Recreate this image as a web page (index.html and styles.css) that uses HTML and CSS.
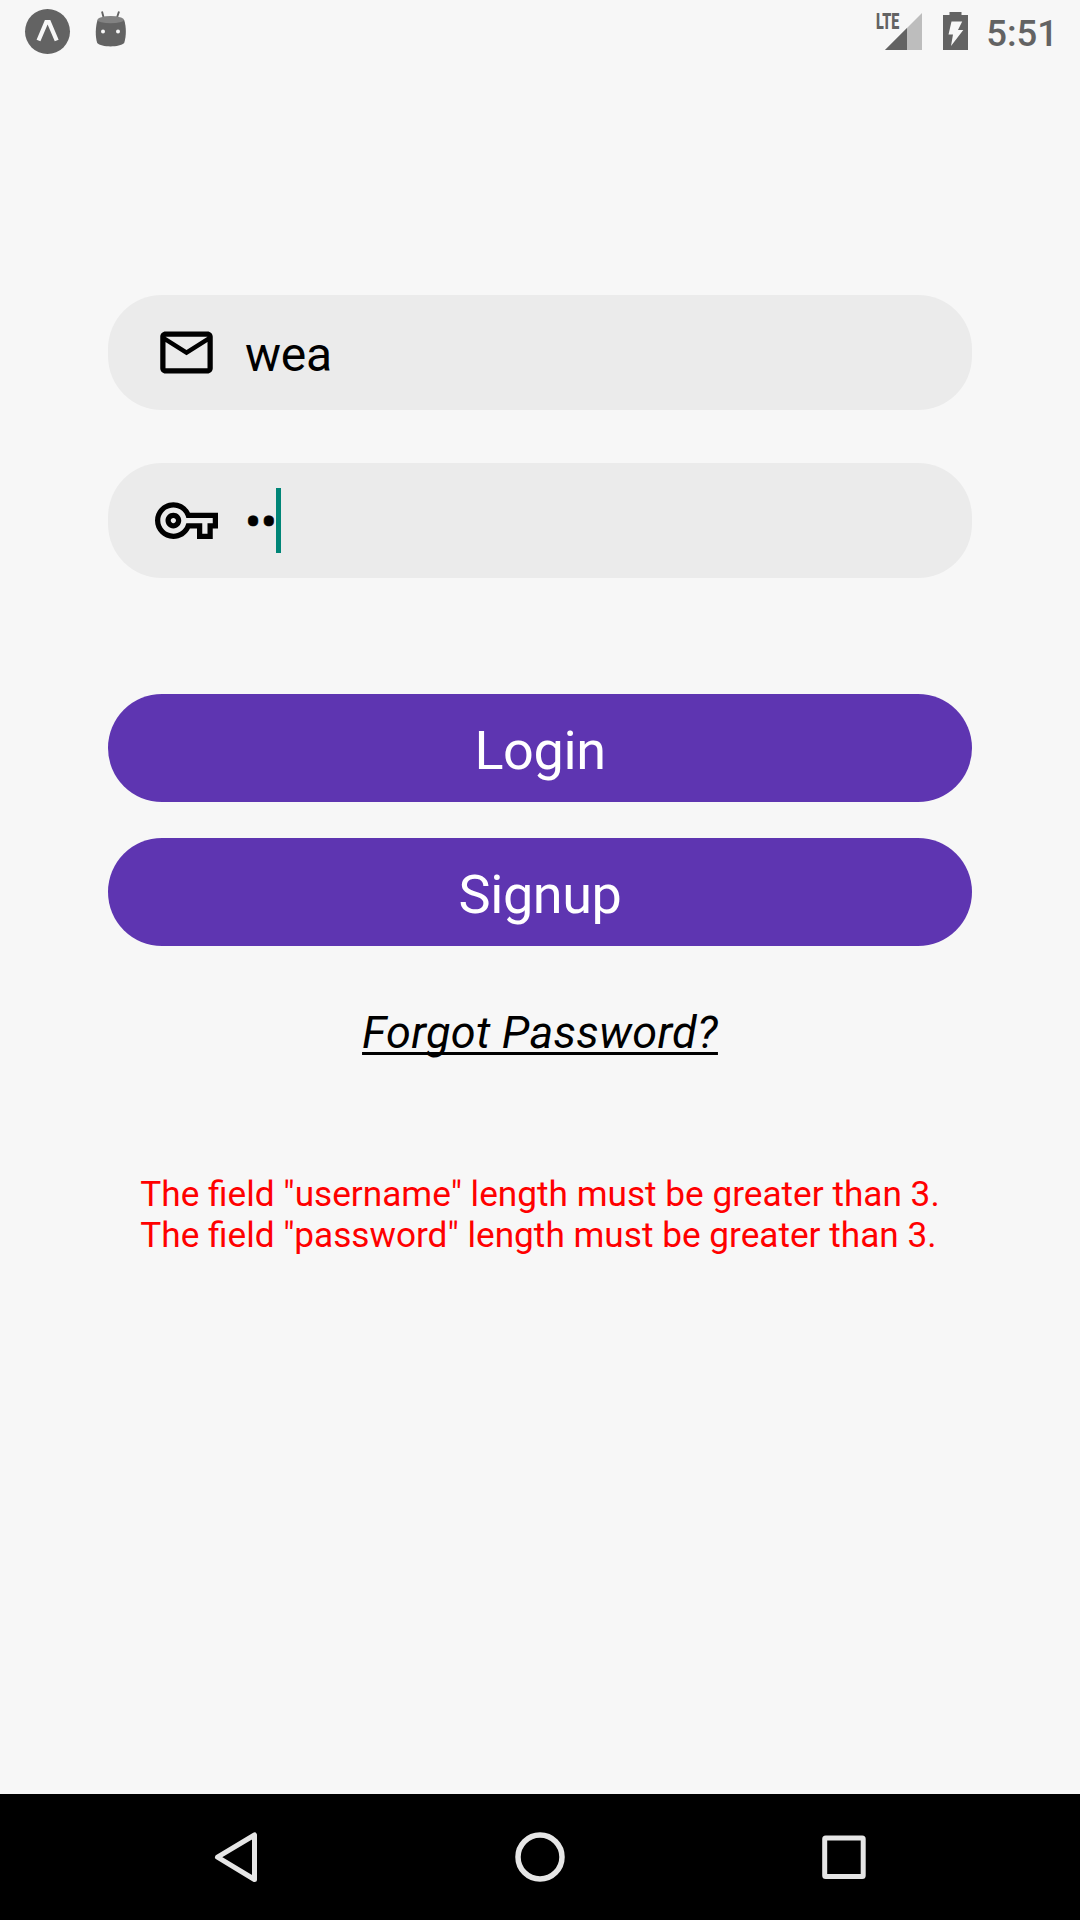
FILE: index.html
```html
<!DOCTYPE html>
<html lang="en">
<head>
<meta charset="utf-8">
<title>Login</title>
<link rel="stylesheet" href="styles.css">
</head>
<body>
<header class="status">
  <svg class="notices" width="130" height="64" viewBox="0 0 130 64">
    <circle cx="47.5" cy="31.5" r="22.5" fill="#636363"/>
    <path d="M38.5 40.5 46.3 22.2h2.6l7.8 18.3" fill="none" stroke="#f7f7f7" stroke-width="4.2"/>
    <path d="M102 11.5 104 19M119 11.5 116.500 19" stroke="#636363" stroke-width="1.9"/>
    <path d="M97.5 20c-2 7-2.5 16-.3 23 4 4.500 22.500 4.500 27 0 2.200-7 2.200-16 0-23z" fill="#636363"/>
    <ellipse cx="110.700" cy="19.700" rx="13.200" ry="3.600" fill="#828282"/>
    <circle cx="103" cy="31.500" r="2" fill="#f7f7f7"/><circle cx="118" cy="31.500" r="2" fill="#f7f7f7"/>
  </svg>
  <div class="indicators">
    <div class="signal">
      <svg width="37" height="37" viewBox="0 0 37 37"><path d="M0 37 37 0v37z" fill="#bdbdbd"/><path d="M0 37 22 15v22z" fill="#636363"/></svg>
      <span class="network">LTE</span>
    </div>
    <svg class="battery" width="25" height="38" viewBox="0 0 25 38"><path fill="#636363" d="M6.500 0h12v3H25v35H0V3h6.500z"/><path fill="#f7f7f7" d="M8.500 9.500h10.700L15 18h5.300L8 34l2-11.500H5.500z"/></svg>
    <span class="clock">5:51</span>
  </div>
</header>
<main class="login">
  <div class="field">
    <svg class="icon" viewBox="0 0 24 24"><path d="M20 4H4c-1.100 0-2 .9-2 2v12c0 1.100.9 2 2 2h16c1.100 0 2-.9 2-2V6c0-1.100-.9-2-2-2zm0 14H4V8l8 5 8-5v10zm-8-7L4 6h16l-8 5z"/></svg>
    <span class="value">wea</span>
  </div>
  <div class="field">
    <svg class="icon" viewBox="0 0 24 24"><path d="M22 19h-6v-4h-2.680c-1.140 2.420-3.600 4-6.320 4-3.860 0-7-3.140-7-7s3.140-7 7-7c2.720 0 5.170 1.580 6.320 4H24v6h-2v4zm-4-2h2v-4h2v-2H11.940l-.23-.67C11.010 8.340 9.110 7 7 7c-2.760 0-5 2.240-5 5s2.240 5 5 5c2.110 0 4.010-1.340 4.710-3.330l.23-.67H18v4zM7 15c-1.650 0-3-1.350-3-3s1.350-3 3-3 3 1.350 3 3-1.350 3-3 3zm0-4c-.55 0-1 .45-1 1s.45 1 1 1 1-.45 1-1-.45-1-1-1z"/></svg>
    <span class="value secret">••</span><span class="caret"></span>
  </div>
  <div class="actions">
    <button class="button">Login</button>
    <button class="button">Signup</button>
  </div>
  <a class="forgot">Forgot Password?</a>
  <p class="errors">The field "username" length must be greater than 3.<br>The field "password" length must be greater than 3.</p>
</main>
<nav class="navbar">
  <svg width="1080" height="126" viewBox="0 0 1080 126" fill="none" stroke="#e6e6e6" stroke-width="5" stroke-linejoin="round">
    <path d="M217.500 63.200 254.500 41v44.500z"/>
    <circle cx="540" cy="63" r="22" stroke-width="5.500"/>
    <rect x="824.700" y="44" width="38.500" height="38.500" rx="1"/>
  </svg>
</nav>
</body>
</html>
```
FILE: styles.css
```css
* { box-sizing: border-box; }
body {
  margin: 0;
  height: 1920px;
  display: flex;
  flex-direction: column;
  background: #f7f7f7;
  color: #000;
  font-family: Roboto, sans-serif;
}
svg { display: block; }
.status {
  height: 72px;
  display: flex;
  justify-content: space-between;
  align-items: flex-start;
  padding-right: 22px;
  color: #636363;
}
.indicators { display: flex; align-items: flex-start; padding-top: 12px; }
.signal { position: relative; padding-top: 1px; margin-right: 21px; }
.network {
  position: absolute;
  left: -9px;
  top: -3px;
  font-size: 22px;
  line-height: 26px;
  font-weight: 900;
  transform: scaleX(.65);
  transform-origin: left;
}
.clock {
  margin-left: 18px;
  padding-top: 1px;
  font-size: 36.5px;
  line-height: 42px;
  font-weight: 500;
}
.login {
  flex: 1;
  display: flex;
  flex-direction: column;
  padding: 223px 108px 0;
}
.field {
  height: 115px;
  margin-bottom: 53px;
  padding-left: 47px;
  display: flex;
  align-items: center;
  background: #ebebeb;
  border-radius: 54px;
}
.icon { width: 63px; height: 63px; margin-right: 27px; }
.value { font-size: 48px; line-height: 56px; padding-top: 5px; letter-spacing: -.3px; }
.secret {
  padding-top: 5px;
  letter-spacing: -.5px;
  -webkit-text-stroke: .6px #000;
}
.caret { width: 5px; height: 65px; background: #008577; }
.actions {
  display: flex;
  flex-direction: column;
  gap: 36px;
  margin-top: 63px;
}
.button {
  height: 108px;
  border: 0;
  border-radius: 54px;
  padding: 5px 0 0;
  background: #5e35b1;
  color: #fff;
  font: 54px/64px Roboto, sans-serif;
  letter-spacing: -.4px;
}
.forgot {
  align-self: center;
  margin-top: 60px;
  font-size: 45px;
  line-height: 53px;
  font-style: italic;
  letter-spacing: .3px;
  text-decoration: underline;
  text-decoration-thickness: 3px;
  text-underline-offset: 4px;
  text-decoration-skip-ink: none;
}
.errors {
  align-self: center;
  margin: 115px 0 0;
  color: #f00;
  font-size: 35.2px;
  line-height: 41px;
  white-space: nowrap;
}
.navbar { height: 126px; background: #000; }
```
